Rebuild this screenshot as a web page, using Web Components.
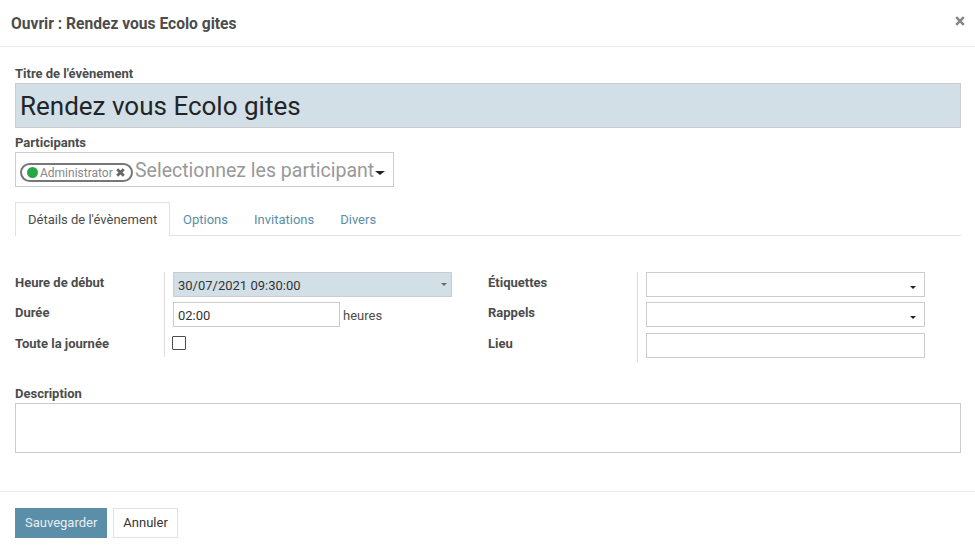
<!DOCTYPE html>
<html lang="fr">
<head>
<meta charset="UTF-8">
<title>Ouvrir : Rendez vous Ecolo gites</title>
<style>
    html, body { margin: 0; background: #fff; }
    body { font: 13px/18px Roboto, sans-serif; color: #4c4c4c; width: 975px; height: 560px; overflow: hidden; }
</style>
</head>
<body>
<event-dialog></event-dialog>
<script>
    // ==================================================================== Helper
    function define(name, css, html) {
        customElements.define(name, class extends HTMLElement {
            constructor() {
                super();
                this.attachShadow({ mode: 'open' }).innerHTML = `<style>${css}</style>${html(this)}`;
            }
        });
    }
    const caret = (w, h, color) => `<svg width="${w * 2}" height="${h}" viewBox="0 0 ${w * 2} ${h}" style="display:block"><path d="M0 0H${w * 2}L${w} ${h}Z" fill="${color}"/></svg>`;

    // ==================================================================== small parts
    define('field-label', `:host{display:block;font-weight:700;font-size:13px;line-height:20px;color:#4c4c4c}`, () => `<slot></slot>`);

    define('user-tag', `
        :host{display:inline-flex;align-items:center;box-sizing:border-box;height:19px;width:113px;padding-left:5px;border:2px solid #777;border-radius:10px;color:#888;font-size:12px;white-space:nowrap;flex:none}
        i{width:11px;height:11px;border-radius:50%;background:#28a745;margin:0 2px 0 0;flex:none}
        svg{margin-left:3px;flex:none}
    `, () => `<i></i><slot></slot><svg width="9" height="9" viewBox="0 0 9 9"><path d="M1.2 1.2l6.6 6.6M7.8 1.2l-6.6 6.6" stroke="#666" stroke-width="2.8"/></svg>`);

    define('select-box', `
        :host{display:flex;box-sizing:border-box;width:279px;height:25px;border:1px solid #ccc;padding:0 8px 0 4px;align-items:center;justify-content:space-between;font-size:13px;color:#333}
        :host([filled]){background:#d2dfe6;padding-right:4px}
        span{padding-top:3px}
        .c{margin-top:3px}
        :host([filled]) .c{margin-top:-3px}
    `, el => `<span><slot></slot></span><span class="c">${caret(3, 3, el.hasAttribute('filled') ? '#666' : '#222')}</span>`);

    define('text-box', `
        :host{display:block;box-sizing:border-box;width:279px;height:25px;border:1px solid #ccc;padding:3px 4px 1px;font-size:13px;line-height:20px;color:#333}
    `, () => `<slot></slot>`);

    define('tab-bar', `
        :host{display:flex;box-sizing:border-box;height:34px;border-bottom:1px solid #dee2e6;font-size:13px;color:#5b8ea8;white-space:nowrap}
        span{padding:9px 13px 0;line-height:18px}
        .on{box-sizing:border-box;height:34px;width:155px;border:1px solid #dee2e6;border-bottom:0;background:#fff;color:#4c4c4c;padding:8px 12px 0}
    `, () => `<span class="on">Détails de l'évènement</span><span>Options</span><span>Invitations</span><span>Divers</span>`);

    define('form-group', `
        :host{display:grid;grid-template-columns:150px 1fr}
        .labels{display:grid;grid-template-rows:30px 31px auto;font-weight:700;color:#4c4c4c;border-right:1px solid #ddd}
        .fields{display:grid;grid-template-rows:30px 31px auto;padding-left:8px}
    `, () => `<div class="labels"><slot name="label"></slot></div><div class="fields"><slot name="field"></slot></div>`);

    define('dialog-header', `
        :host{display:flex;justify-content:space-between;box-sizing:border-box;height:47px;border-bottom:1px solid #e9ecef;padding:15px 10px 0 11px}
        h4{margin:0;font-size:15.6px;line-height:19px;font-weight:700;color:#4c4c4c}
        svg{margin-top:1px}
    `, () => `<h4><slot></slot></h4><svg width="10" height="10" viewBox="0 0 10 10"><path d="M1.2 1.2l7.6 7.6M8.8 1.2l-7.6 7.6" stroke="#888" stroke-width="2.6"/></svg>`);

    // ==================================================================== <event-dialog>
    define('event-dialog', `
        :host{display:flex;flex-direction:column;height:560px}
        main{padding:17px 14px 0 15px;height:444px;box-sizing:border-box}
        .title{box-sizing:border-box;height:45px;border:1px solid #ccc;background:#d2dfe6;font-size:26px;line-height:45px;padding-left:4px;color:#212529}
        .many{display:flex;align-items:center;box-sizing:border-box;width:379px;height:35px;border:1px solid #ccc;padding:6px 0 0 4px;margin-bottom:15px}
        .many b{font-weight:400;font-size:19.5px;color:#999;line-height:24px;white-space:nowrap;margin:-3px 1px 0 2px}
        .hours{display:flex;align-items:center;gap:3px;height:25px}
        .hours text-box{width:167px}
        .hours span{padding-top:2px}
        .cols{display:grid;grid-template-columns:473px 1fr;margin:36px 0 0;align-items:start}
        .checkrow{height:24px}
        .check{box-sizing:border-box;width:14px;height:14px;border:1px solid #4c4c4c;border-radius:1px;margin:3px 0 0 -1px}
        .lieu{margin-bottom:4px}
        .desc{margin-top:22px}
        .area{box-sizing:border-box;height:50px;border:1px solid #ccc}
        footer{border-top:1px solid #e9ecef;padding:16px 15px;display:flex;gap:6px}
        button{font:13px/18px Roboto,sans-serif;height:30px;padding:0 9px;border:1px solid #5b8ea8;background:#5b8ea8;color:#e8eef2;border-radius:0}
        button+button{background:#fff;border:1px solid #dee2e6;color:#333}
        .l{font-weight:700;line-height:20px;padding-top:1px}
    `, () => `
        <dialog-header>Ouvrir : Rendez vous Ecolo gites</dialog-header>
        <main>
            <field-label style="line-height:19px">Titre de l'évènement</field-label>
            <div class="title">Rendez vous Ecolo gites</div>
            <field-label style="margin-top:5px;line-height:19px">Participants</field-label>
            <div class="many"><user-tag>Administrator</user-tag><b>Selectionnez les participant</b>${caret(5, 4, '#222')}</div>
            <tab-bar></tab-bar>
            <div class="cols">
                <form-group>
                    <div slot="label" class="l">Heure de début</div>
                    <div slot="label" class="l">Durée</div>
                    <div slot="label" class="l">Toute la journée</div>
                    <select-box slot="field" filled>30/07/2021 09:30:00</select-box>
                    <div slot="field" class="hours"><text-box>02:00</text-box><span>heures</span></div>
                    <div slot="field" class="checkrow"><div class="check"></div></div>
                </form-group>
                <form-group>
                    <div slot="label" class="l">Étiquettes</div>
                    <div slot="label" class="l">Rappels</div>
                    <div slot="label" class="l">Lieu</div>
                    <select-box slot="field"></select-box>
                    <select-box slot="field"></select-box>
                    <text-box slot="field" class="lieu"></text-box>
                </form-group>
            </div>
            <div class="desc">
                <field-label style="line-height:19px">Description</field-label>
                <div class="area"></div>
            </div>
        </main>
        <footer><button>Sauvegarder</button><button>Annuler</button></footer>
    `);
</script>
</body>
</html>
